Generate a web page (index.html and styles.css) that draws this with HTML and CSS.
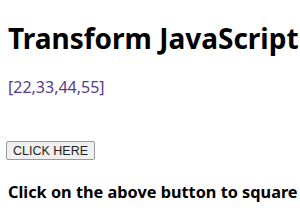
FILE: index.html
```
<!DOCTYPE html>
<html lang="en">
<head>
    <meta charset="UTF-8">
    <meta name="viewport" content="width=device-width, initial-scale=1.0">
    <title>Transform JavaScript Arrays</title>
    <link rel="stylesheet" href="styles.css">
</head>
<body>
    <h1 class="title">Transform JavaScript</h1>
    <p class="result" id="result">[22,33,44,55]</p>
    <button class="square-btn" onclick="squareArray()">CLICK HERE</button>
    <h3 class="hint">Click on the above button to square</h3>

    <script>
        let arr = [22, 33, 44, 55];
        function squareArray() {
            arr = arr.map(function (n) { return n * n; });
            document.getElementById("result").innerText = JSON.stringify(arr);
        }
    </script>
</body>
</html>
```

FILE: styles.css
```
body {
    margin: 0;
    padding: 0 8px;
    font-family: "Noto Sans", "Open Sans", sans-serif;
    color: #000000;
    background: #ffffff;
    overflow: hidden;
}
.title {
    font-size: 28px;
    line-height: 38px;
    font-weight: bold;
    margin: 19px 0 0;
    white-space: nowrap;
}
.result {
    font-size: 16px;
    line-height: 23px;
    color: #553c8b;
    margin: 19px 0 0;
}
.square-btn {
    display: block;
    margin: 42px 0 0 -2px;
    height: 19px;
    padding: 0 6px;
    font-family: "Liberation Sans", Arial, sans-serif;
    font-size: 12.5px;
    color: #222222;
    background: #f0f0f0;
    border: 1px solid #9a9a9a;
    border-radius: 2px;
}
.hint {
    font-size: 16.3px;
    line-height: 25px;
    font-weight: bold;
    margin: 20px 0 0;
    white-space: nowrap;
}
```
